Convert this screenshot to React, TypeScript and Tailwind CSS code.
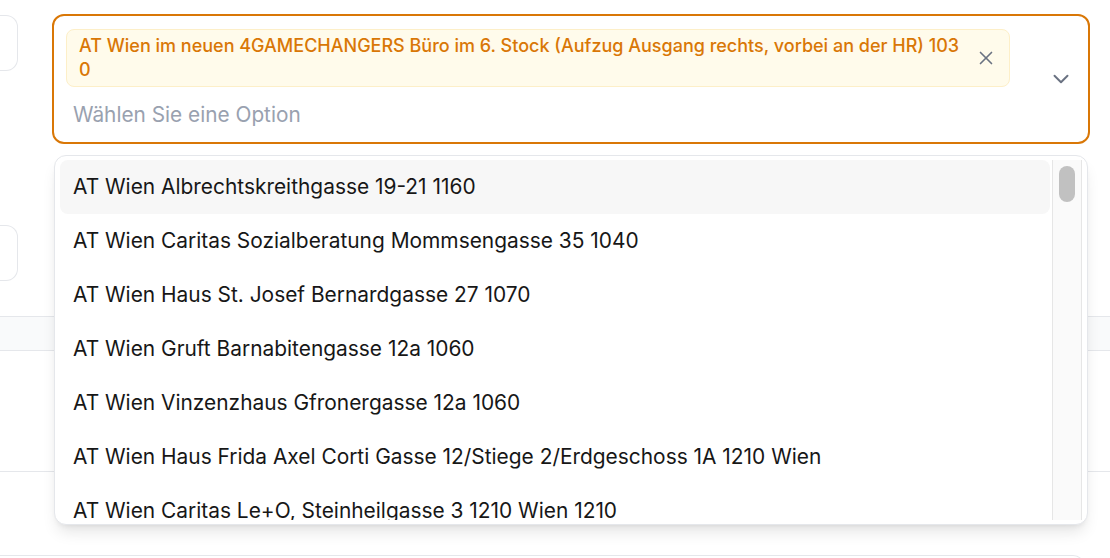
import { ChevronDown, X } from "lucide-react"

const options = [
  "AT Wien Albrechtskreithgasse 19-21 1160",
  "AT Wien Caritas Sozialberatung Mommsengasse 35 1040",
  "AT Wien Haus St. Josef Bernardgasse 27 1070",
  "AT Wien Gruft Barnabitengasse 12a 1060",
  "AT Wien Vinzenzhaus Gfronergasse 12a 1060",
  "AT Wien Haus Frida Axel Corti Gasse 12/Stiege 2/Erdgeschoss 1A 1210 Wien",
  "AT Wien Caritas Le+O, Steinheilgasse 3 1210 Wien 1210",
]

export default function App() {
  return (
    <div className="relative w-[1110px] h-[558px] overflow-hidden bg-white font-['Inter',sans-serif]">
      {/* page behind the popover */}
      <div className="flex h-[316px]">
        <div className="w-[18px] shrink-0 pt-[15px] flex flex-col">
          <div className="h-[56px] border border-l-0 border-gray-200 rounded-r-xl" />
          <div className="h-[56px] mt-[154px] border border-l-0 border-gray-200 rounded-r-xl" />
        </div>

        <div className="ml-[34px] mt-[14px] w-[1038px] h-[130px] border-2 border-[#d97706] rounded-xl flex items-center pl-3">
          <div className="w-[944px] flex flex-col gap-[14px]">
            <div className="flex items-center bg-[#fffbeb] border border-[#fdefc8] rounded-lg py-[4px] pl-3">
              <span className="flex-1 min-w-0 text-[18px] leading-6 font-medium text-[#d97706] break-all">
                AT Wien im neuen 4GAMECHANGERS Büro im 6. Stock (Aufzug Ausgang rechts, vorbei an der HR) 1030
              </span>
              <button className="ml-[10px] mr-[12px] text-gray-500">
                <X size={22} strokeWidth={1.8} />
              </button>
            </div>
            <div className="pl-[7px] text-[20.8px] leading-7 text-gray-400">Wählen Sie eine Option</div>
          </div>
          <ChevronDown size={26} strokeWidth={1.8} className="ml-[38px] text-gray-500" />
        </div>
      </div>
      <div className="h-[35px] bg-gray-50 border-y border-gray-200" />
      <div className="h-[121px] border-b border-gray-200" />
      <div className="h-[83px]" />
      <div className="h-[20px] w-[1085px] border border-l-0 border-gray-200 rounded-tr-xl" />

      {/* options popover */}
      <div className="absolute left-[54px] top-[155px] w-[1034px] h-[370px] bg-white border border-gray-200 rounded-xl shadow-lg px-[5px] py-[4px] flex">
        <ul className="w-[992px] h-[360px] overflow-hidden flex flex-col pr-[2px]">
          {options.map((o, i) => (
            <li
              key={o}
              className={
                "h-[54px] shrink-0 flex items-center pl-[13px] rounded-lg text-[20.9px] text-[#171717] whitespace-nowrap " +
                (i === 0 ? "bg-[#f7f7f7]" : "")
              }
            >
              {o}
            </li>
          ))}
        </ul>
        <div className="w-[30px] h-[360px] bg-[#fafafa] border-x border-[#e6e6e6] flex justify-center pt-[6px]">
          <div className="w-4 h-[36px] rounded-full bg-[#c1c1c1]" />
        </div>
      </div>
    </div>
  )
}
